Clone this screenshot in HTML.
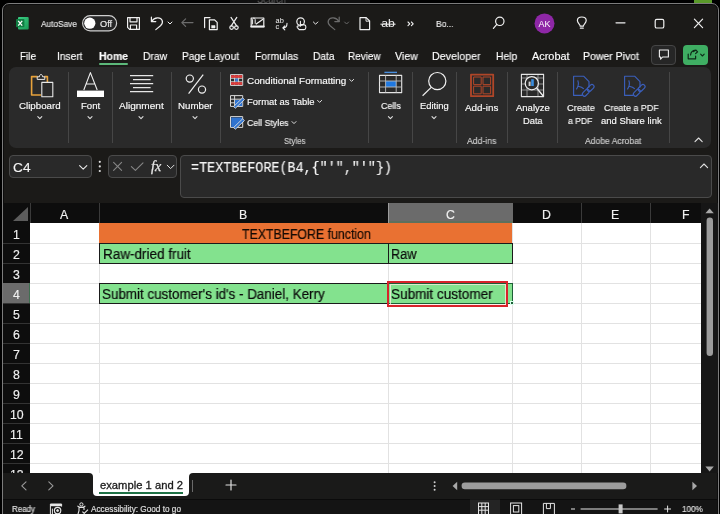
<!DOCTYPE html>
<html><head><meta charset="utf-8">
<style>
*{margin:0;padding:0;box-sizing:border-box}
html,body{width:720px;height:514px;overflow:hidden;background:#000}
body{position:relative;font-family:"Liberation Sans",sans-serif}
.a{position:absolute;display:block}
svg.a{will-change:transform}
.t{will-change:transform;-webkit-text-stroke:0.15px currentColor;position:absolute;white-space:pre;line-height:1;transform-origin:0 0;display:inline-block}
</style></head><body>
<span class="t" style="left:257.00px;top:-5px;font-size:10px;color:#7a7a7a;transform:scaleX(0.9152);">Search</span>
<div class="a" style="left:230px;top:0px;width:140px;height:3px;background:rgba(40,40,40,0.4);"></div>
<div class="a" style="left:2px;top:3px;width:717px;height:530px;border:1px solid #7c7c7c;border-radius:7px;background:#0c0c0c"></div>
<div class="a" style="left:4px;top:5px;width:713px;height:526px;border-radius:5px;background:#1b1a18"></div>
<div class="a" style="left:694px;top:0px;width:18px;height:3px;background:#5a9a2a;"></div>
<svg class="a" style="left:0px;top:0px;" width="720" height="40" viewBox="0 0 720 40">
<defs><linearGradient id="xg" x1="0" y1="0" x2="1" y2="1"><stop offset="0" stop-color="#3ccf86"/><stop offset="1" stop-color="#1a9a55"/></linearGradient></defs>
<rect x="18" y="17" width="10.7" height="12.5" rx="1" fill="url(#xg)"/>
<rect x="16" y="19" width="8.4" height="8.2" rx="0.8" fill="#107c41"/>
<path d="M18.2 20.8 L22.2 25.6 M22.2 20.8 L18.2 25.6" stroke="#fff" stroke-width="1.3"/>
<rect x="82.6" y="15.6" width="34" height="15.2" rx="7.6" fill="#262626" stroke="#cfcfcf" stroke-width="1.2"/>
<circle cx="89.8" cy="23.2" r="5.6" fill="#fff"/>
<g fill="none" stroke="#f0f0f0" stroke-width="1.2" stroke-linejoin="round" stroke-linecap="round">
<path d="M127.6 17.6 H139.4 V29.4 H129.6 L127.6 27.4 Z"/>
<path d="M130 17.6 V21.8 H137 V17.6"/>
<path d="M130.4 29.4 V25 H136.6 V29.4"/>
<path d="M151.4 17.2 V21.6 H155.8"/>
<path d="M151.6 21.4 C154.5 17.2 160.5 16.6 162.2 20.6 C163 22.6 162 24.4 160.5 25.8 L155.8 29.6"/>
<path d="M168 22 L170 24 L172 22" stroke-width="1"/>
<path d="M193 22.6 H181.8 M185.6 18.8 L181.8 22.6 L185.6 26.4" stroke="#6c6c6c"/>
<path d="M204.6 27.6 V17.6 H210"/>
<path d="M209.4 19.8 H214.6 L217.2 22.4 V29.6 H209.4 Z"/>
<path d="M211.8 25.6 H215 V28 H211.8 Z" fill="#f0f0f0" stroke-width="0.6"/>
<path d="M231 17.4 L236.6 25.8 M236.8 17.4 L231.2 25.8"/>
<circle cx="231.6" cy="27.6" r="1.8"/><circle cx="236.4" cy="27.6" r="1.8"/>
<path d="M251.2 18 H263.8 V27 H251.2 Z"/>
<path d="M251.2 26.4 H263.8" stroke-width="1.8"/>
<path d="M256.2 24 L262.6 19.4"/>
<path d="M252.6 24 V19.6 C252.6 17.6 255.2 17.6 255.2 19.6 V23.4" stroke-width="1"/>
<path d="M287 23.4 C287 26.2 285.6 27.8 282.8 27.8 M284.8 25.8 L282.8 27.8 L284.8 29.8" stroke-width="1.1"/>
<circle cx="300.6" cy="21.6" r="3.8"/>
<path d="M300.4 21.4 V26.2 M299 26 C297.6 25.4 296.6 26.6 297.4 27.6 L299.2 29.6 H304 C305 29.6 305.8 28.8 305.8 27.8 V26.4 C305.8 25.6 305.2 25 304.4 24.9 L300.6 24.4" stroke-width="1.1"/>
<path d="M313.4 22 L315.6 24.2 L317.8 22" stroke-width="1"/>
<g stroke="#6c6c6c">
<path d="M339.2 17.2 V21.6 H334.8"/>
<path d="M339 21.4 C336.1 17.2 330.1 16.6 328.4 20.6 C327.6 22.6 328.6 24.4 330.1 25.8 L334.8 29.6"/>
<path d="M344.6 22 L346.6 24 L348.6 22" stroke-width="1"/>
</g>
<path d="M360 17.6 H366.2 L369.6 21 V29.6 H360 Z"/>
<path d="M366 17.8 V21.2 H369.4" stroke-width="0.9"/>
<path d="M380.8 24.2 H395.2" stroke-width="1"/>
<path d="M408 22 L409.8 23.8 L408 25.6 M411.4 22 L413.2 23.8 L411.4 25.6" stroke-width="1.1"/>
<circle cx="499.8" cy="21.3" r="4.2"/>
<path d="M496.8 24.4 L493.4 28.4"/>
<path d="M580.2 26.2 C580.2 24.2 577.4 23.4 577.4 20.6 C577.4 18.4 579.4 17 581.8 17 C584.2 17 586.2 18.4 586.2 20.6 C586.2 23.4 583.4 24.2 583.4 26.2 Z"/>
<path d="M580.4 28.2 H583.2" stroke-width="1.3"/>
<path d="M616 22.8 H625"/>
<rect x="655.2" y="19.4" width="8.6" height="8.6" rx="1.6"/>
<path d="M694.4 19.2 L702.6 27.6 M702.6 19.2 L694.4 27.6"/>
</g>
<text x="275.6" y="23" font-family="Liberation Sans" font-size="7.4" fill="#f0f0f0">ab</text>
<text x="275.6" y="29.4" font-family="Liberation Sans" font-size="7.4" fill="#f0f0f0">c</text>
<text x="381.2" y="27.4" font-family="Liberation Sans" font-size="10" textLength="13.6" lengthAdjust="spacingAndGlyphs" fill="#f0f0f0">ab</text>
<circle cx="544.5" cy="23.4" r="10" fill="#8e27a6"/>
<text x="544.5" y="26.6" text-anchor="middle" font-family="Liberation Sans" font-size="9" fill="#fff">AK</text>
</svg>
<span class="t" style="left:41.00px;top:20px;font-size:8.8px;color:#e6e6e6;transform:scaleX(0.9435);">AutoSave</span>
<span class="t" style="left:100.00px;top:20px;font-size:9.2px;color:#f0f0f0;transform:scaleX(0.9922);">Off</span>
<span class="t" style="left:435.80px;top:20px;font-size:9.2px;color:#f0f0f0;transform:scaleX(0.9256);">Bo...</span>
<span class="t" style="left:20.00px;top:51px;font-size:10.8px;color:#ffffff;transform:scaleX(0.9192);">File</span>
<span class="t" style="left:57.30px;top:51px;font-size:10.8px;color:#ffffff;transform:scaleX(0.9402);">Insert</span>
<span class="t" style="left:99.30px;top:51px;font-size:10.8px;color:#ffffff;font-weight:bold;transform:scaleX(0.9667);">Home</span>
<span class="t" style="left:142.70px;top:51px;font-size:10.8px;color:#ffffff;transform:scaleX(0.9523);">Draw</span>
<span class="t" style="left:182.30px;top:51px;font-size:10.8px;color:#ffffff;transform:scaleX(0.9400);">Page Layout</span>
<span class="t" style="left:255.00px;top:51px;font-size:10.8px;color:#ffffff;transform:scaleX(0.9622);">Formulas</span>
<span class="t" style="left:312.70px;top:51px;font-size:10.8px;color:#ffffff;transform:scaleX(0.9468);">Data</span>
<span class="t" style="left:348.30px;top:51px;font-size:10.8px;color:#ffffff;transform:scaleX(0.9236);">Review</span>
<span class="t" style="left:395.00px;top:51px;font-size:10.8px;color:#ffffff;transform:scaleX(0.9777);">View</span>
<span class="t" style="left:432.30px;top:51px;font-size:10.8px;color:#ffffff;transform:scaleX(0.9895);">Developer</span>
<span class="t" style="left:496.00px;top:51px;font-size:10.8px;color:#ffffff;transform:scaleX(0.9586);">Help</span>
<span class="t" style="left:531.70px;top:51px;font-size:10.8px;color:#ffffff;transform:scaleX(1.0102);">Acrobat</span>
<span class="t" style="left:583.30px;top:51px;font-size:10.8px;color:#ffffff;transform:scaleX(0.9721);">Power Pivot</span>
<div class="a" style="left:99px;top:63px;width:29px;height:2px;background:#5cb87a;border-radius:1px"></div>
<div class="a" style="left:9px;top:67px;width:702px;height:81px;background:#2a2a2a;border-radius:7px"></div>
<div class="a" style="left:68px;top:72px;width:1px;height:71px;background:#464646;"></div>
<div class="a" style="left:112px;top:72px;width:1px;height:71px;background:#464646;"></div>
<div class="a" style="left:171px;top:72px;width:1px;height:71px;background:#464646;"></div>
<div class="a" style="left:220px;top:72px;width:1px;height:71px;background:#464646;"></div>
<div class="a" style="left:368px;top:72px;width:1px;height:71px;background:#464646;"></div>
<div class="a" style="left:412px;top:72px;width:1px;height:71px;background:#464646;"></div>
<div class="a" style="left:456px;top:72px;width:1px;height:71px;background:#464646;"></div>
<div class="a" style="left:507px;top:72px;width:1px;height:71px;background:#464646;"></div>
<div class="a" style="left:557px;top:72px;width:1px;height:71px;background:#464646;"></div>
<div class="a" style="left:669px;top:72px;width:1px;height:71px;background:#464646;"></div>
<span class="t" style="left:19.10px;top:101px;font-size:9.4px;color:#fafafa;transform:scaleX(1.0388);">Clipboard</span>
<span class="t" style="left:81.20px;top:101px;font-size:9.4px;color:#fafafa;transform:scaleX(1.0231);">Font</span>
<span class="t" style="left:119.00px;top:101px;font-size:9.4px;color:#fafafa;transform:scaleX(1.0719);">Alignment</span>
<span class="t" style="left:178.00px;top:101px;font-size:9.4px;color:#fafafa;transform:scaleX(1.0347);">Number</span>
<span class="t" style="left:246.70px;top:76px;font-size:9.4px;color:#fafafa;transform:scaleX(1.0527);">Conditional Formatting</span>
<span class="t" style="left:246.70px;top:97px;font-size:9.4px;color:#fafafa;transform:scaleX(1.0068);">Format as Table</span>
<span class="t" style="left:246.70px;top:118px;font-size:9.4px;color:#fafafa;transform:scaleX(0.9391);">Cell Styles</span>
<span class="t" style="left:283.50px;top:137px;font-size:8.8px;color:#d0d0d0;transform:scaleX(0.8970);">Styles</span>
<span class="t" style="left:380.60px;top:101px;font-size:9.4px;color:#fafafa;transform:scaleX(0.9499);">Cells</span>
<span class="t" style="left:419.60px;top:101px;font-size:9.4px;color:#fafafa;">Editing</span>
<span class="t" style="left:465.00px;top:103px;font-size:9.4px;color:#fafafa;transform:scaleX(1.0473);">Add-ins</span>
<span class="t" style="left:467.00px;top:137px;font-size:8.8px;color:#d0d0d0;transform:scaleX(0.9823);">Add-ins</span>
<span class="t" style="left:515.60px;top:103px;font-size:9.4px;color:#fafafa;transform:scaleX(1.0132);">Analyze</span>
<span class="t" style="left:522.70px;top:116px;font-size:9.4px;color:#fafafa;transform:scaleX(0.9893);">Data</span>
<span class="t" style="left:566.90px;top:103px;font-size:9.4px;color:#fafafa;transform:scaleX(0.9879);">Create</span>
<span class="t" style="left:568.30px;top:116px;font-size:9.4px;color:#fafafa;transform:scaleX(0.9218);">a PDF</span>
<span class="t" style="left:603.70px;top:103px;font-size:9.4px;color:#fafafa;transform:scaleX(0.9562);">Create a PDF</span>
<span class="t" style="left:600.60px;top:116px;font-size:9.4px;color:#fafafa;transform:scaleX(1.0127);">and Share link</span>
<span class="t" style="left:585.30px;top:137px;font-size:8.8px;color:#d0d0d0;transform:scaleX(0.9737);">Adobe Acrobat</span>
<div class="a" style="left:9px;top:155px;width:83px;height:23px;background:#292929;border:1px solid #4a4a4a;border-radius:4px"></div>
<span class="t" style="left:13.00px;top:161px;font-size:13.5px;color:#f4f4f4;transform:scaleX(1.0136);">C4</span>
<div class="a" style="left:108px;top:155px;width:69px;height:23px;background:#292929;border:1px solid #4a4a4a;border-radius:4px"></div>
<div class="a" style="left:180px;top:155px;width:532px;height:43px;background:#292929;border:1px solid #4a4a4a;border-radius:4px"></div>
<span class="t" style="left:191.00px;top:161px;font-size:14.8px;color:#f4f4f4;font-family:'Liberation Mono',monospace;transform:scaleX(0.9054);">=TEXTBEFORE(B4,{&quot;&#x27;&quot;,&quot;&#x27;&quot;})</span>
<div class="a" style="left:3px;top:203px;width:698px;height:20px;background:#0d0d0d;"></div>
<div class="a" style="left:3px;top:223px;width:27px;height:250px;background:#0d0d0d;"></div>
<div class="a" style="left:30px;top:223px;width:671px;height:250px;background:#ffffff;"></div>
<div class="a" style="left:701px;top:203px;width:17px;height:270px;background:#161616;"></div>
<div class="a" style="left:99px;top:223px;width:1px;height:250px;background:#e2e2e2;"></div>
<div class="a" style="left:388px;top:223px;width:1px;height:250px;background:#e2e2e2;"></div>
<div class="a" style="left:512px;top:223px;width:1px;height:250px;background:#e2e2e2;"></div>
<div class="a" style="left:581px;top:223px;width:1px;height:250px;background:#e2e2e2;"></div>
<div class="a" style="left:650px;top:223px;width:1px;height:250px;background:#e2e2e2;"></div>
<div class="a" style="left:30px;top:243px;width:671px;height:1px;background:#e2e2e2;"></div>
<div class="a" style="left:3px;top:243px;width:27px;height:1px;background:#333333;"></div>
<div class="a" style="left:30px;top:263px;width:671px;height:1px;background:#e2e2e2;"></div>
<div class="a" style="left:3px;top:263px;width:27px;height:1px;background:#333333;"></div>
<div class="a" style="left:30px;top:283px;width:671px;height:1px;background:#e2e2e2;"></div>
<div class="a" style="left:3px;top:283px;width:27px;height:1px;background:#333333;"></div>
<div class="a" style="left:30px;top:303px;width:671px;height:1px;background:#e2e2e2;"></div>
<div class="a" style="left:3px;top:303px;width:27px;height:1px;background:#333333;"></div>
<div class="a" style="left:30px;top:323px;width:671px;height:1px;background:#e2e2e2;"></div>
<div class="a" style="left:3px;top:323px;width:27px;height:1px;background:#333333;"></div>
<div class="a" style="left:30px;top:343px;width:671px;height:1px;background:#e2e2e2;"></div>
<div class="a" style="left:3px;top:343px;width:27px;height:1px;background:#333333;"></div>
<div class="a" style="left:30px;top:363px;width:671px;height:1px;background:#e2e2e2;"></div>
<div class="a" style="left:3px;top:363px;width:27px;height:1px;background:#333333;"></div>
<div class="a" style="left:30px;top:383px;width:671px;height:1px;background:#e2e2e2;"></div>
<div class="a" style="left:3px;top:383px;width:27px;height:1px;background:#333333;"></div>
<div class="a" style="left:30px;top:403px;width:671px;height:1px;background:#e2e2e2;"></div>
<div class="a" style="left:3px;top:403px;width:27px;height:1px;background:#333333;"></div>
<div class="a" style="left:30px;top:423px;width:671px;height:1px;background:#e2e2e2;"></div>
<div class="a" style="left:3px;top:423px;width:27px;height:1px;background:#333333;"></div>
<div class="a" style="left:30px;top:443px;width:671px;height:1px;background:#e2e2e2;"></div>
<div class="a" style="left:3px;top:443px;width:27px;height:1px;background:#333333;"></div>
<div class="a" style="left:30px;top:463px;width:671px;height:1px;background:#e2e2e2;"></div>
<div class="a" style="left:3px;top:463px;width:27px;height:1px;background:#333333;"></div>
<div class="a" style="left:30px;top:203px;width:1px;height:20px;background:#3a3a3a;"></div>
<div class="a" style="left:99px;top:203px;width:1px;height:20px;background:#3a3a3a;"></div>
<div class="a" style="left:581px;top:203px;width:1px;height:20px;background:#3a3a3a;"></div>
<div class="a" style="left:650px;top:203px;width:1px;height:20px;background:#3a3a3a;"></div>
<div class="a" style="left:388px;top:203px;width:125px;height:20px;background:#6b6b6b;"></div>
<div class="a" style="left:3px;top:283px;width:27px;height:20px;background:#6b6b6b;"></div>
<div class="a" style="left:29px;top:283px;width:1px;height:20px;background:#3f6f50;"></div>
<div class="a" style="left:388px;top:203px;width:1px;height:20px;background:#9c9c9c;"></div>
<div class="a" style="left:389px;top:221px;width:124px;height:2px;background:#5d705d;"></div>
<svg class="a" style="left:3px;top:203px;" width="27" height="20" viewBox="0 0 27 20"><polygon points="25,4 25,18 10,18" fill="#5c5c5c"/></svg>
<span class="t" style="left:60.40px;top:209px;font-size:12.3px;color:#f0f0f0;">A</span>
<span class="t" style="left:239.40px;top:209px;font-size:12.3px;color:#f0f0f0;">B</span>
<span class="t" style="left:445.55px;top:209px;font-size:12.3px;color:#f0f0f0;">C</span>
<span class="t" style="left:542.05px;top:209px;font-size:12.3px;color:#f0f0f0;">D</span>
<span class="t" style="left:611.40px;top:209px;font-size:12.3px;color:#f0f0f0;">E</span>
<span class="t" style="left:682.24px;top:209px;font-size:12.3px;color:#f0f0f0;">F</span>
<span class="t" style="left:13.08px;top:229px;font-size:12.3px;color:#f0f0f0;">1</span>
<span class="t" style="left:13.08px;top:249px;font-size:12.3px;color:#f0f0f0;">2</span>
<span class="t" style="left:13.08px;top:269px;font-size:12.3px;color:#f0f0f0;">3</span>
<span class="t" style="left:13.08px;top:289px;font-size:12.3px;color:#f0f0f0;">4</span>
<span class="t" style="left:13.08px;top:309px;font-size:12.3px;color:#f0f0f0;">5</span>
<span class="t" style="left:13.08px;top:329px;font-size:12.3px;color:#f0f0f0;">6</span>
<span class="t" style="left:13.08px;top:349px;font-size:12.3px;color:#f0f0f0;">7</span>
<span class="t" style="left:13.08px;top:369px;font-size:12.3px;color:#f0f0f0;">8</span>
<span class="t" style="left:13.08px;top:389px;font-size:12.3px;color:#f0f0f0;">9</span>
<span class="t" style="left:9.66px;top:409px;font-size:12.3px;color:#f0f0f0;">10</span>
<span class="t" style="left:10.12px;top:429px;font-size:12.3px;color:#f0f0f0;">11</span>
<span class="t" style="left:9.66px;top:449px;font-size:12.3px;color:#f0f0f0;">12</span>
<span class="t" style="left:9.66px;top:469px;font-size:12.3px;color:#f0f0f0;">13</span>
<div class="a" style="left:99px;top:223px;width:413px;height:20px;background:#e97132;"></div>
<div class="a" style="left:99px;top:243px;width:290px;height:21px;background:#83e28e;border:1px solid #1a1a1a"></div>
<div class="a" style="left:388px;top:243px;width:125px;height:21px;background:#83e28e;border:1px solid #1a1a1a"></div>
<div class="a" style="left:99px;top:283px;width:290px;height:21px;background:#83e28e;border:1px solid #1a1a1a"></div>
<div class="a" style="left:388px;top:283px;width:125px;height:21px;background:#83e28e;border:1px solid #1a1a1a"></div>
<span class="t" style="left:241.60px;top:228px;font-size:13.8px;color:#140a04;transform:scaleX(0.8935);-webkit-text-stroke:0.2px currentColor;">TEXTBEFORE function</span>
<span class="t" style="left:102.50px;top:248px;font-size:13.8px;color:#0b0b0b;transform:scaleX(0.9786);-webkit-text-stroke:0.2px currentColor;">Raw-dried fruit</span>
<span class="t" style="left:391.30px;top:248px;font-size:13.8px;color:#0b0b0b;transform:scaleX(0.9164);-webkit-text-stroke:0.2px currentColor;">Raw</span>
<span class="t" style="left:102.30px;top:288px;font-size:13.8px;color:#0b0b0b;transform:scaleX(0.9718);-webkit-text-stroke:0.2px currentColor;">Submit customer&#x27;s id&#x27;s - Daniel, Kerry</span>
<span class="t" style="left:391.10px;top:288px;font-size:13.8px;color:#0b0b0b;transform:scaleX(0.9825);-webkit-text-stroke:0.2px currentColor;">Submit customer</span>
<div class="a" style="left:388px;top:283px;width:125px;height:21px;background:transparent;border:1.5px solid #1d5e37"></div>
<div class="a" style="left:510px;top:301px;width:4px;height:4px;background:#1d5e37;border:0.5px solid #dfe"></div>
<div class="a" style="left:387px;top:281px;width:121px;height:26px;background:transparent;border:2.5px solid #d8232b"></div>
<div class="a" style="left:389.5px;top:283.5px;width:116px;height:21px;background:transparent;border:1px solid rgba(255,235,225,0.75)"></div>
<div class="a" style="left:3px;top:473px;width:714px;height:26px;background:#1a1a19;"></div>
<div class="a" style="left:80px;top:473px;width:120px;height:6px;background:#ffffff;"></div>
<div class="a" style="left:3px;top:473px;width:90px;height:26px;background:#1a1a19;border-radius:0 4px 0 0"></div>
<div class="a" style="left:189px;top:473px;width:528px;height:26px;background:#1a1a19;border-radius:4px 0 0 0"></div>
<div class="a" style="left:93px;top:473px;width:96px;height:23px;background:#ffffff;border-radius:0 0 4px 4px"></div>
<span class="t" style="left:99.50px;top:480px;font-size:11.2px;color:#1a1a1a;transform:scaleX(1.0032);-webkit-text-stroke:0.3px currentColor;">example 1 and 2</span>
<div class="a" style="left:99px;top:492px;width:84px;height:2px;background:#1e7145;"></div>
<div class="a" style="left:3px;top:499px;width:714px;height:15px;background:#141414;"></div>
<div class="a" style="left:3px;top:499px;width:714px;height:1px;background:#0b0b0b;"></div>
<span class="t" style="left:12.00px;top:506px;font-size:8.2px;color:#e0e0e0;transform:scaleX(0.9716);">Ready</span>
<span class="t" style="left:90.50px;top:506px;font-size:8.2px;color:#e0e0e0;transform:scaleX(1.0038);">Accessibility: Good to go</span>
<span class="t" style="left:681.80px;top:505px;font-size:9px;color:#e0e0e0;transform:scaleX(0.9031);">100%</span>
<div class="a" style="left:651px;top:45px;width:25px;height:20px;background:#262626;border:1px solid #454545;border-radius:4px"></div>
<div class="a" style="left:683px;top:45px;width:25px;height:20px;background:#3fae63;border-radius:4px"></div>
<svg class="a" style="left:0px;top:0px;" width="720" height="514" viewBox="0 0 720 514">
<g fill="none" stroke="#f0f0f0" stroke-width="1.1" stroke-linejoin="round">
<path d="M659.4 50 H668.4 V57 H662.6 L660.6 59.2 V57 H659.4 Z"/>
</g>
<g fill="none" stroke="#0e2a18" stroke-width="1.2" stroke-linejoin="round" stroke-linecap="round">
<path d="M693.6 51.6 L695.8 50 L697.6 51.8 L695.6 53.6 M695.6 50.2 C692.6 50.6 690.8 52.2 690.6 55"/>
<path d="M688.2 54 V58.8 H695.6 V56"/>
<path d="M700.6 54.2 L702.4 56 L704.2 54.2" stroke-width="1.1"/>
</g>
</svg>
<svg class="a" style="left:0px;top:0px;" width="720" height="514" viewBox="0 0 720 514">
<g fill="none" stroke-linejoin="round">
<path d="M37.5 76.6 H31.6 V95 H41" stroke="#e8a33c" stroke-width="1.6"/>
<path d="M44.4 76.6 H47.4 V82" stroke="#e8a33c" stroke-width="1.6"/>
<path d="M37.2 79.4 V76.8 H39.4 C39.6 75.2 40.2 74.4 41 74.4 C41.8 74.4 42.4 75.2 42.6 76.8 H44.8 V79.4 Z" stroke="#e8e8e8" stroke-width="1"/>
<rect x="41.8" y="82.4" width="11" height="14.4" stroke="#e8e8e8" stroke-width="1.1"/>
<path d="M83.8 90 L90.4 72.6 L97.2 90 M86.4 84 H94.6" stroke="#f0f0f0" stroke-width="1.1"/>
<rect x="77" y="90.6" width="27" height="6.4" fill="#ffffff"/>
<g stroke="#e6e6e6" stroke-width="1.1">
<path d="M130 75.6 H153.2 M133 79.6 H150.6 M130 83.6 H153.2 M133 87.6 H150.6 M130 91.6 H153.2"/>
</g>
<g stroke="#f0f0f0" stroke-width="1.2">
<circle cx="189.8" cy="78.6" r="3.6"/>
<circle cx="202" cy="89.6" r="3.6"/>
<path d="M188.6 93.6 L203.2 74.6"/>
</g>
<g stroke="#d8d8d8" stroke-width="1">
<rect x="230.5" y="74.6" width="12.2" height="10.8"/>
<path d="M234.6 74.6 V85.4 M238.6 74.6 V85.4 M230.5 78.2 H242.7 M230.5 81.8 H242.7"/>
</g>
<rect x="231" y="75.2" width="11.2" height="2.6" fill="#e03c3c"/>
<rect x="231" y="82.2" width="11.2" height="2.6" fill="#e03c3c"/>
<rect x="235.2" y="78.6" width="2.8" height="2.8" fill="#3a7ad8"/>
<g stroke="#d8d8d8" stroke-width="1">
<rect x="230.5" y="95.6" width="12.2" height="10.8"/>
<path d="M234.6 95.6 V106.4 M230.5 99.2 H242.7 M230.5 102.8 H237"/>
</g>
<path d="M235 100 H242.2 V106 H235 Z" fill="#2f73d0"/>
<path d="M233.6 106.6 L242.6 97.8 L244.4 99.6 L235.4 108.2 Z" fill="#2f73d0" stroke="#e0e0e0" stroke-width="0.9"/>
<rect x="230.5" y="116.6" width="12.2" height="10.8" stroke="#d8d8d8" stroke-width="1"/>
<path d="M231.2 117.4 H242 V122 L236 127 H231.2 Z" fill="#2f73d0"/>
<path d="M233.6 127.6 L242.6 118.8 L244.4 120.6 L235.4 129.2 Z" fill="#2f73d0" stroke="#e0e0e0" stroke-width="0.9"/>
<path d="M384.4 72.4 H397" stroke="#4a90e0" stroke-width="1.4"/>
<rect x="385.8" y="81" width="10.4" height="6" fill="#1f78e0"/>
<g stroke="#e6e6e6" stroke-width="1.1">
<rect x="379.5" y="75.4" width="22.2" height="17.2"/>
<path d="M385.6 75.4 V92.6 M396.2 75.4 V92.6 M379.5 81 H401.7 M379.5 87 H401.7" stroke-width="0.9" stroke="#bdbdbd"/>
</g>
<g stroke="#f0f0f0" stroke-width="1.2">
<circle cx="437.3" cy="81.1" r="8.6"/>
<path d="M431.2 87.4 L422.6 95.8"/>
</g>
<g stroke="#b04628">
<rect x="471" y="74.6" width="22.2" height="21.6" stroke-width="1.8"/>
<rect x="473.6" y="77" width="7.6" height="7.6" stroke-width="1"/>
<rect x="483" y="77" width="7.6" height="7.6" stroke-width="1"/>
<rect x="473.6" y="86.2" width="7.6" height="7.6" stroke-width="1"/>
<rect x="483" y="86.2" width="7.6" height="7.6" stroke-width="1"/>
</g>
<g stroke="#9a9a9a" stroke-width="0.9">
<path d="M521.6 78 H543.4 M521.6 84 H543.4 M521.6 90 H543.4 M527 74.6 V96.4 M538 74.6 V96.4"/>
</g>
<rect x="521.4" y="74.4" width="22.2" height="22.2" stroke="#e6e6e6" stroke-width="1.1"/>
<circle cx="531.8" cy="83.2" r="6.6" fill="#2a2a2a" stroke="#f0f0f0" stroke-width="1.2"/>
<path d="M536.6 88 L543.2 96" stroke="#f0f0f0" stroke-width="1.3"/>
<rect x="528.6" y="81.6" width="2" height="4.4" fill="#d0d0d0"/>
<rect x="531.2" y="79.2" width="2.6" height="6.8" fill="#3a8ee0"/>
<g stroke="#3b5fbb" stroke-width="1.15">
<path d="M582.6 95.4 H573.6 V76.2 H583.6 L589 81.6 V87.4"/>
<path d="M577.8 80.4 C578.8 83.2 578.2 86.8 576.4 89.4 M578.2 86.2 C580.2 86.6 582.2 87.2 583.8 88.8"/>
<rect x="581.8" y="90.6" width="8" height="4.2" rx="2.1" transform="rotate(-45 585.8 92.7)"/>
<rect x="586.6" y="85.8" width="8" height="4.2" rx="2.1" transform="rotate(-45 590.6 87.9)"/>
<path d="M633.6 95.4 H624.6 V76.2 H634.6 L640 81.6 V87.4"/>
<path d="M628.8 80.4 C629.8 83.2 629.2 86.8 627.4 89.4 M629.2 86.2 C631.2 86.6 633.2 87.2 634.8 88.8"/>
<rect x="632.8" y="90.6" width="8" height="4.2" rx="2.1" transform="rotate(-45 636.8 92.7)"/>
<rect x="637.6" y="85.8" width="8" height="4.2" rx="2.1" transform="rotate(-45 641.6 87.9)"/>
</g>
<g stroke="#e0e0e0" stroke-width="1.1" stroke-linecap="round">
<path d="M37.8 116.6 L39.8 118.6 L41.8 116.6"/>
<path d="M88 116.6 L90 118.6 L92 116.6"/>
<path d="M139 116.6 L141 118.6 L143 116.6"/>
<path d="M193 116.6 L195 118.6 L197 116.6"/>
<path d="M388.4 116.6 L390.4 118.6 L392.4 116.6"/>
<path d="M432 116.6 L434 118.6 L436 116.6"/>
<path d="M349.6 79.4 L351.6 81.4 L353.6 79.4" stroke-width="1"/>
<path d="M317.6 100.4 L319.6 102.4 L321.6 100.4" stroke-width="1"/>
<path d="M292 121.6 L294 123.6 L296 121.6" stroke-width="1"/>
<path d="M695 141.6 L698.6 138 L702.2 141.6"/>
<path d="M700.4 167.6 L704 164 L707.6 167.6"/>
</g>
</g>
</svg>
<svg class="a" style="left:0px;top:0px;" width="720" height="514" viewBox="0 0 720 514">
<g fill="none" stroke-linecap="round" stroke-linejoin="round">
<path d="M79.6 165.6 L83.2 169.2 L86.8 165.6" stroke="#e8e8e8" stroke-width="1.1"/>
<path d="M113.6 162.4 L121.6 170.4 M121.6 162.4 L113.6 170.4" stroke="#868686" stroke-width="1.1"/>
<path d="M131.4 166.6 L135.4 170.4 L143 162.8" stroke="#868686" stroke-width="1.1"/>
<path d="M167.2 165.2 L170.6 168.6 L174 165.2" stroke="#e0e0e0" stroke-width="1"/>
<path d="M26 481.8 L21.8 485.8 L26 489.8" stroke="#9a9a9a" stroke-width="1.1"/>
<path d="M48.8 481.8 L53 485.8 L48.8 489.8" stroke="#9a9a9a" stroke-width="1.1"/>
<path d="M231 480 V490 M226 485 H236" stroke="#e0e0e0" stroke-width="1.2"/>
</g>
<circle cx="99.8" cy="161.8" r="1.1" fill="#e0e0e0"/>
<circle cx="99.8" cy="166.4" r="1.1" fill="#e0e0e0"/>
<circle cx="99.8" cy="171" r="1.1" fill="#e0e0e0"/>
<text x="151" y="170.8" font-family="Liberation Serif" font-style="italic" font-size="14.2" fill="#e8e8e8" stroke="#e8e8e8" stroke-width="0.25">fx</text>
<path d="M705.4 213.2 L709.6 208.4 L713.8 213.2 Z" fill="#a8a8a8"/>
<rect x="706.6" y="217.6" width="6.4" height="138.4" rx="3.2" fill="#9c9c9c"/>
<path d="M705.4 466.6 L709.6 471.4 L713.8 466.6 Z" fill="#a8a8a8"/>
<path d="M457.2 481.8 L452.6 486 L457.2 490.2 Z" fill="#a8a8a8"/>
<path d="M692.4 481.8 L697 486 L692.4 490.2 Z" fill="#a8a8a8"/>
<rect x="461.6" y="482.6" width="164.8" height="6.6" rx="3.3" fill="#9c9c9c"/>
<circle cx="434.6" cy="482.2" r="1" fill="#d0d0d0"/>
<circle cx="434.6" cy="486" r="1" fill="#d0d0d0"/>
<circle cx="434.6" cy="489.8" r="1" fill="#d0d0d0"/>
<path d="M192.5 480 V492" stroke="#6a6a6a" stroke-width="1"/>
</svg>
<svg class="a" style="left:0px;top:0px;" width="720" height="514" viewBox="0 0 720 514">
<rect x="470" y="499.5" width="30" height="15" fill="#242424"/>
<g fill="none" stroke="#e6e6e6" stroke-width="1">
<rect x="478.5" y="503" width="10" height="12"/>
<path d="M481.8 503 V514 M485.2 503 V514 M478.5 506.6 H488.5 M478.5 510.2 H488.5"/>
<rect x="510.6" y="503" width="11" height="12"/>
<rect x="513.4" y="505.6" width="5.4" height="6.4"/>
<path d="M543.4 514 V503.4 H554.4 V514 M546.4 503.4 V508.6 H550.4 V503.4"/>
<path d="M50.4 514 V504 H61.6 V506.6"/>
<path d="M52.4 514 V508.6"/>
<circle cx="57.6" cy="510.6" r="3.2" stroke-width="1.2"/>
<circle cx="57.6" cy="510.6" r="1" fill="#e6e6e6"/>
<path d="M77.4 505.8 C78.6 507 80 507.4 81.4 507.4 C82.8 507.4 84.2 507 85.4 505.8 M79 507 V510.6 L78 514 M84 507 V510" stroke-width="1.1"/>
<circle cx="81.4" cy="504.4" r="1.6" stroke-width="1"/>
<path d="M82.4 511.6 L84.2 513.4 L88 509.6" stroke-width="1.1"/>
<path d="M571 509 H575 M580.6 509 H657.6 M664.2 509 H671 M667.6 505.6 V512.4"/>
</g>
<rect x="618.6" y="504.4" width="4" height="9" fill="#c8c8c8"/>
<rect x="50.4" y="504" width="11.2" height="2.2" fill="#e6e6e6"/>
</svg>
</body></html>
